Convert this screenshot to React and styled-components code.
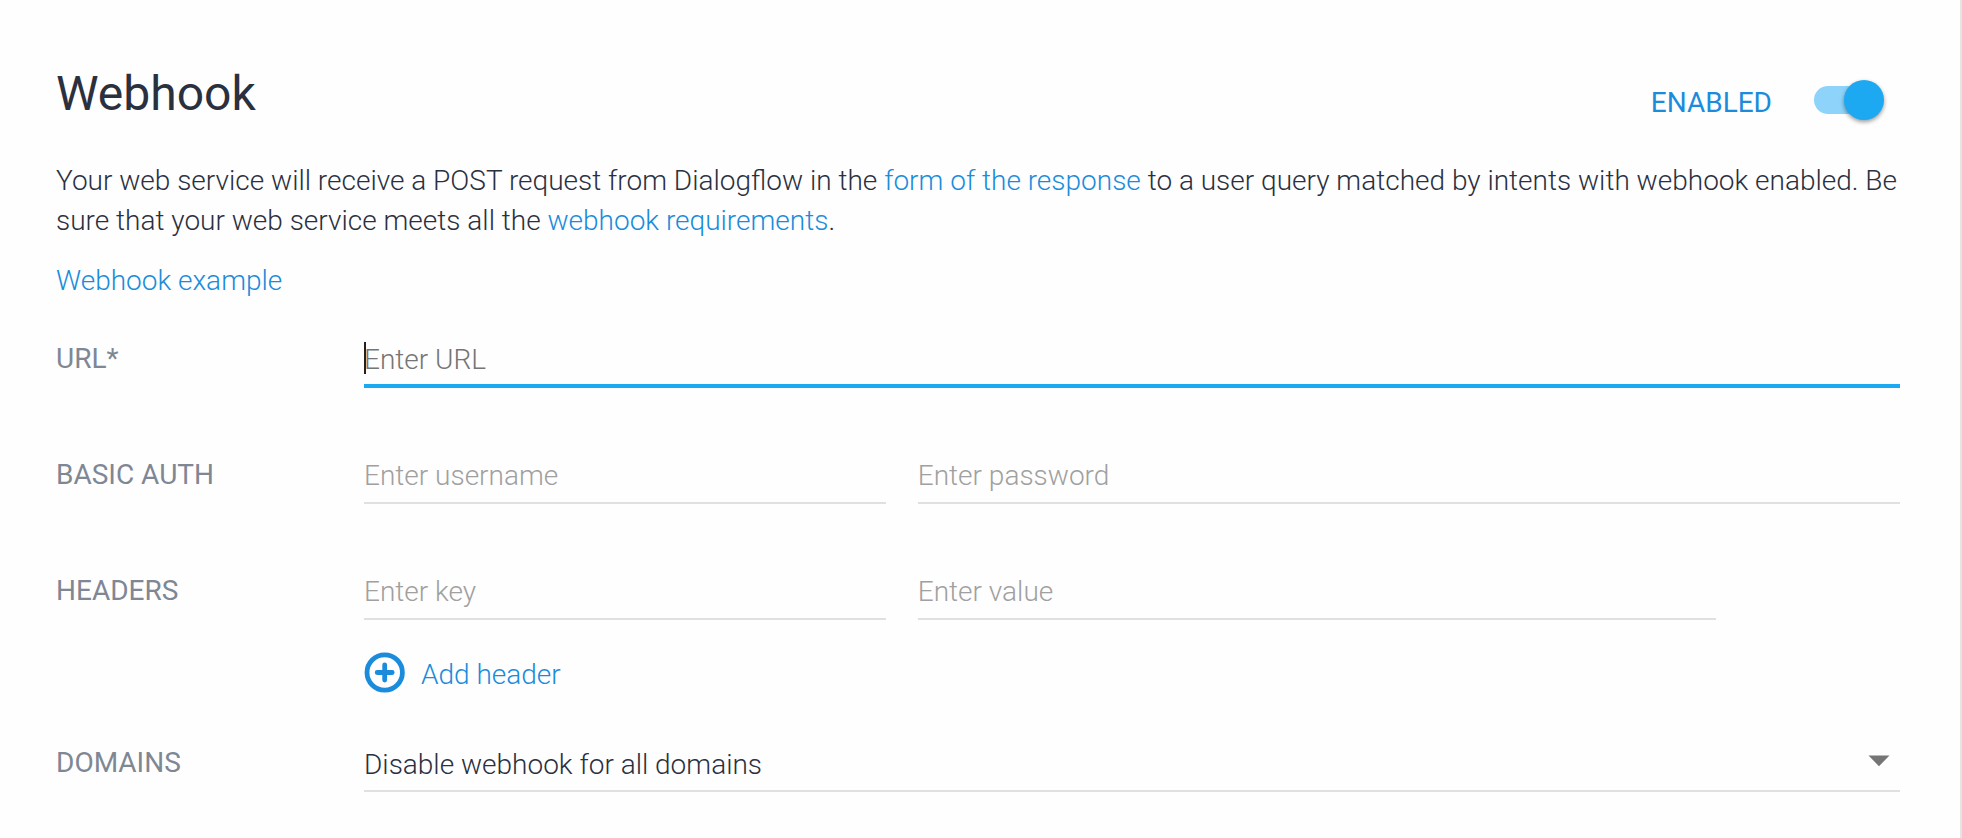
import React, { useState } from "react";
import styled, { createGlobalStyle } from "styled-components";

const GlobalStyle = createGlobalStyle`
  *, *::before, *::after { box-sizing: border-box; }
  body {
    margin: 0;
    background: #fefefe;
    color: #2b303f;
    font-family: Roboto, "Liberation Sans", sans-serif;
    font-size: 28px;
    font-weight: 300;
    line-height: 40px;
  }
`;

const Page = styled.main`
  min-height: 100vh;
  padding: 66px 60px 46px 56px;
  border-right: 2px solid #e5e5e5;
`;

const Header = styled.header`
  display: flex;
  justify-content: space-between;
  align-items: flex-start;
  padding-right: 16px;
`;

const Title = styled.h1`
  margin: 0;
  font-size: 48px;
  font-weight: 400;
  line-height: 56px;
`;

const SwitchLabel = styled.label`
  display: flex;
  align-items: center;
  gap: 42px;
  padding-top: 16px;
  color: #1a8cdb;
  font-weight: 400;
  line-height: 42px;
  cursor: pointer;
`;

const Switch = styled.input`
  appearance: none;
  display: flex;
  align-items: center;
  justify-content: ${(p) => (p.checked ? "flex-end" : "flex-start")};
  width: 70px;
  height: 28px;
  margin: 0 0 6px;
  border-radius: 14px;
  background: linear-gradient(
    to right,
    ${(p) => (p.checked ? "#8ed4fa" : "#c4c4c4")} 64px,
    transparent 64px
  );
  cursor: pointer;

  &::before {
    content: "";
    flex: none;
    width: 40px;
    height: 40px;
    border-radius: 50%;
    background: ${(p) => (p.checked ? "#1da9f2" : "#fafafa")};
    box-shadow: 0 2px 4px rgba(0, 0, 0, 0.4);
  }
`;

const Link = styled.a`
  color: #1a8cdb;
  text-decoration: none;
`;

const Description = styled.div`
  display: flex;
  flex-direction: column;
  gap: 20px;
  margin-top: 37px;
`;

const Text = styled.p`
  margin: 0;
`;

const Form = styled.form`
  display: flex;
  flex-direction: column;
  gap: 66px;
  margin-top: 37px;
`;

const Row = styled.div`
  display: grid;
  grid-template-columns: 308px 1fr;
  align-items: start;
`;

const RowGroup = styled.div`
  display: flex;
  flex-direction: column;
  gap: 44px;
`;

const RowLabel = styled.label`
  color: #7f8795;
  font-weight: 400;
  line-height: 42px;
`;

const Fields = styled.div`
  display: grid;
  grid-template-columns: ${(p) => (p.$pair ? "17fr 32fr" : "1fr")};
  gap: 32px;
`;

const Field = styled.div`
  position: relative;
  display: flex;
  height: 50px;
  margin-right: ${(p) => (p.$removable ? 184 : 0)}px;
  border-bottom: ${(p) => (p.$active ? "4px solid #1da9f2" : "2px solid #e0e0e0")};

  &::after {
    content: "";
    display: ${(p) => (p.$active ? "block" : "none")};
    position: absolute;
    top: 4px;
    left: 0;
    width: 2px;
    height: 32px;
    background: #212121;
  }
`;

const Input = styled.input`
  width: 100%;
  height: 42px;
  padding: 0;
  border: 0;
  outline: 0;
  background: transparent;
  color: inherit;
  font: inherit;
  caret-color: transparent;

  &::placeholder {
    color: ${(p) => (p.$active ? "#757575" : "#a0a0a0")};
    opacity: 1;
  }
`;

const AddButton = styled.button`
  display: flex;
  align-items: flex-start;
  justify-self: start;
  gap: 16px;
  padding: 0;
  border: 0;
  background: none;
  color: #1a8cdb;
  font: inherit;
  line-height: 46px;
  cursor: pointer;
`;

const SelectField = styled.div`
  display: grid;
  align-items: start;
  height: 50px;
  border-bottom: 2px solid #e0e0e0;

  > * { grid-area: 1 / 1; }

  > svg {
    justify-self: end;
    margin: 13px 10px 0 0;
    pointer-events: none;
  }
`;

const Select = styled.select`
  appearance: none;
  width: 100%;
  height: 46px;
  padding: 0;
  border: 0;
  outline: 0;
  background: transparent;
  color: inherit;
  font: inherit;
  line-height: 46px;
`;

const PlusCircle = () => (
  <svg width="41" height="41" viewBox="0 0 41 41" fill="none" stroke="currentColor" aria-hidden="true">
    <circle cx="20.7" cy="20.5" r="17.7" strokeWidth="4.8" />
    <path d="M20.7 13v15M13.2 20.5h15" strokeWidth="4.8" strokeLinecap="round" />
  </svg>
);

const Arrow = () => (
  <svg width="22" height="12" viewBox="0 0 22 12" aria-hidden="true">
    <path d="M0.5 0.6h21L11 11.2z" fill="#757575" />
  </svg>
);

export default function App() {
  const [enabled, setEnabled] = useState(true);

  return (
    <Page>
      <GlobalStyle />
      <Header>
        <Title>Webhook</Title>
        <SwitchLabel>
          {enabled ? "ENABLED" : "DISABLED"}
          <Switch
            type="checkbox"
            role="switch"
            checked={enabled}
            onChange={(e) => setEnabled(e.target.checked)}
          />
        </SwitchLabel>
      </Header>

      <Description>
        <Text>
          Your web service will receive a POST request from Dialogflow in the{" "}
          <Link href="#response">form of the response</Link> to a user query matched by intents
          with webhook enabled. Be sure that your web service meets all the{" "}
          <Link href="#requirements">webhook requirements</Link>.
        </Text>
        <Text>
          <Link href="#example">Webhook example</Link>
        </Text>
      </Description>

      <Form onSubmit={(e) => e.preventDefault()}>
        <Row>
          <RowLabel htmlFor="url">URL*</RowLabel>
          <Fields>
            <Field $active>
              <Input id="url" $active placeholder="Enter URL" />
            </Field>
          </Fields>
        </Row>
        <Row>
          <RowLabel htmlFor="username">BASIC AUTH</RowLabel>
          <Fields $pair>
            <Field>
              <Input id="username" placeholder="Enter username" />
            </Field>
            <Field>
              <Input type="password" aria-label="Password" placeholder="Enter password" />
            </Field>
          </Fields>
        </Row>
        <RowGroup>
          <Row>
            <RowLabel htmlFor="key">HEADERS</RowLabel>
            <Fields $pair>
              <Field>
                <Input id="key" placeholder="Enter key" />
              </Field>
              <Field $removable>
                <Input aria-label="Header value" placeholder="Enter value" />
              </Field>
              <AddButton type="button">
                <PlusCircle />
                Add header
              </AddButton>
            </Fields>
          </Row>
          <Row>
            <RowLabel htmlFor="domains">DOMAINS</RowLabel>
            <SelectField>
              <Select id="domains">
                <option>Disable webhook for all domains</option>
                <option>Enable webhook for all domains</option>
              </Select>
              <Arrow />
            </SelectField>
          </Row>
        </RowGroup>
      </Form>
    </Page>
  );
}
